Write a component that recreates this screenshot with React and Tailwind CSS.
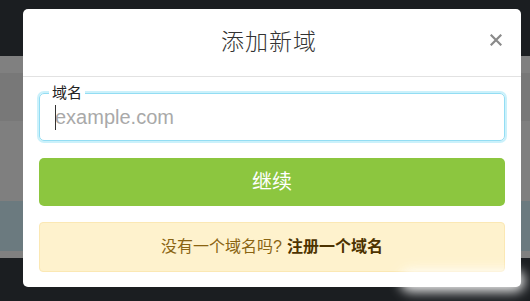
import React from 'react';

const cjk = { fontFamily: '"Liberation Sans", "Noto Sans CJK SC", sans-serif' };

const Backdrop = () => (
  <div className="flex flex-col w-full h-full">
    <div className="h-[56px] bg-[#1b1e21]" />
    <div className="h-[17px] bg-[#808080]" />
    <div className="h-[48px] bg-[#787878]" />
    <div className="h-[80px] bg-[#7f7f7f]" />
    <div className="h-[50px] bg-[#6b7a7f]" />
    <div className="h-[7px] bg-[#808080]" />
    <div className="flex-1 bg-[#1b1e21]" />
  </div>
);

const AddDomainModal = () => (
  <div
    className="absolute left-[23px] top-[9px] w-[498px] h-[278px] bg-white rounded-[5px] flex flex-col"
    style={cjk}
  >
    {/* Header */}
    <div className="relative h-[68px] flex items-center justify-center border-b border-[#e2e2e2]">
      <h2 className="text-[23px] font-light text-[#333] tracking-[1px] -ml-[6px]">添加新域</h2>
      <button className="absolute right-[18px] top-[24px] w-[14px] h-[14px] flex items-center justify-center">
        <svg viewBox="0 0 12 12" className="w-[12px] h-[12px]" stroke="#8a8a8a" strokeWidth="2.2" strokeLinecap="square">
          <path d="M1.5 1.5 L10.5 10.5 M10.5 1.5 L1.5 10.5" />
        </svg>
      </button>
    </div>

    {/* Body */}
    <div className="flex flex-col px-4 pt-[16px]">
      <div className="relative h-[48px] rounded-[5px] border border-[#93ddf3] shadow-[0_0_0_2px_#cbf1fb]">
        <span className="absolute -top-[10px] left-[9px] px-[3px] bg-white text-[15px] leading-[18px] text-[#222]">
          域名
        </span>
        <div className="absolute left-[15px] top-[11px] w-px h-[25px] bg-[#333]" />
        <input
          className="w-full h-full bg-transparent outline-none pl-[15px] pr-3 text-[20px] text-[#333] placeholder:text-[#a9a9a9]"
          style={{ fontFamily: '"Liberation Sans", Arial, sans-serif' }}
          placeholder="example.com"
        />
      </div>

      <button className="mt-[17px] h-[48px] rounded-[5px] bg-[#8cc63f] text-white text-[20px]">
        继续
      </button>

      <div className="mt-[16px] h-[50px] rounded-[4px] bg-[#fef2cd] border border-[#fbe8b4] flex items-center justify-center text-[16px] text-[#8a6412]">
        <span>没有一个域名吗?</span>
        <a href="#" className="ml-[5px] font-bold text-[#4d3300]">注册一个域名</a>
      </div>
    </div>
  </div>
);

export default function App() {
  return (
    <div className="relative w-[530px] h-[301px] overflow-hidden">
      <Backdrop />
      <AddDomainModal />
      {/* smear at the bottom right of the capture */}
      <div className="absolute left-[400px] top-[270px] w-[125px] h-[22px] rounded-full bg-white blur-[6px] opacity-90" />
    </div>
  );
}
